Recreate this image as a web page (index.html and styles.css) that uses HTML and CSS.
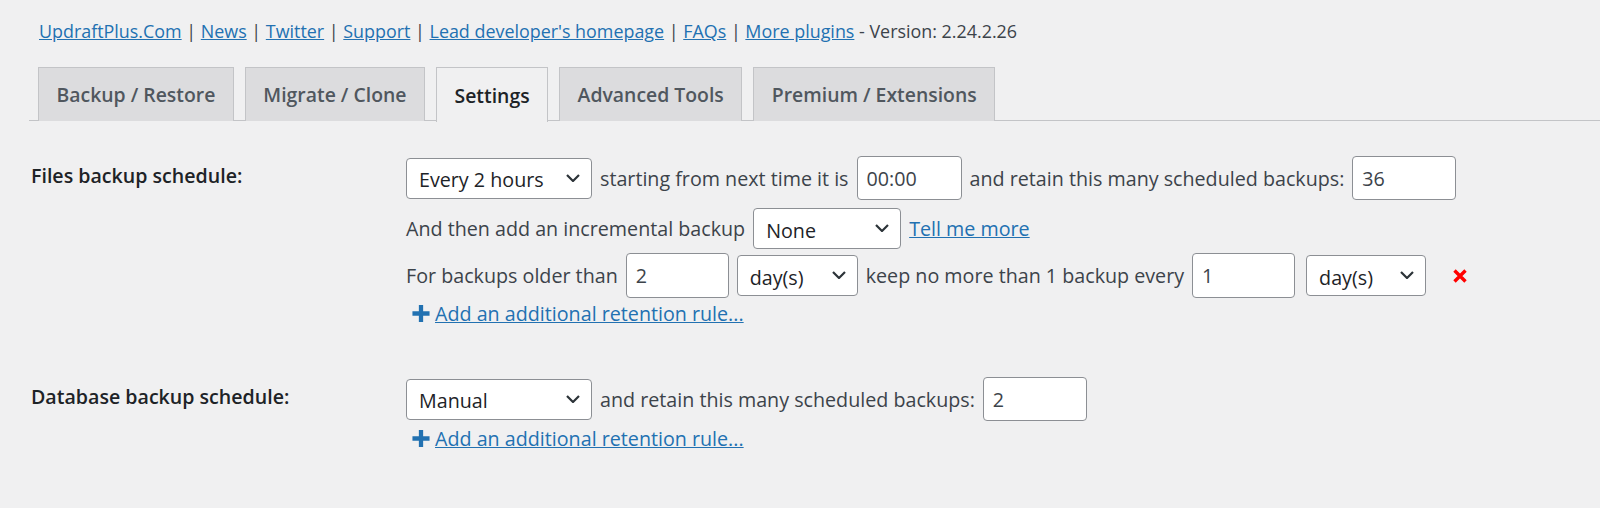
FILE: index.html
```html
<html lang="en">
    <head>
        <meta http-equiv="content-type" content="text/html; charset=utf-8" />
        <link rel="stylesheet" href="styles.css">
    </head>
    <body>
        <div class="wrap">
            <div class="topLinks">
                <a href="#">UpdraftPlus.Com</a> | <a href="#">News</a> | <a href="#">Twitter</a> | <a href="#">Support</a> | <a href="#">Lead developer's homepage</a> | <a href="#">FAQs</a> | <a href="#">More plugins</a> - Version: 2.24.2.26
            </div>

            <div class="tabs">
                <a class="tab" href="#">Backup / Restore</a>
                <a class="tab" href="#">Migrate / Clone</a>
                <a class="tab active" href="#">Settings</a>
                <a class="tab" href="#">Advanced Tools</a>
                <a class="tab" href="#">Premium / Extensions</a>
            </div>

            <div class="settingsRow filesRow">
                <label class="rowTitle">Files backup schedule:</label>
                <div class="rowBody">
                    <div class="line line1">
                        <span class="selectWrap w186">
                            <select class="select"><option>Every 2 hours</option></select>
                            <svg class="chev" viewBox="0 0 14 8"><path d="M1 1 L7 7 L13 1" /></svg>
                        </span>
                        <span>starting from next time it is</span>
                        <input class="input w105" type="text" value="00:00">
                        <span>and retain this many scheduled backups:</span>
                        <input class="input w104" type="number" value="36">
                    </div>
                    <div class="line line2">
                        <span>And then add an incremental backup</span>
                        <span class="selectWrap w148">
                            <select class="select"><option>None</option></select>
                            <svg class="chev" viewBox="0 0 14 8"><path d="M1 1 L7 7 L13 1" /></svg>
                        </span>
                        <a href="#">Tell me more</a>
                    </div>
                    <div class="line line3">
                        <span>For backups older than</span>
                        <input class="input w103 tall" type="number" value="2">
                        <span class="selectWrap w121">
                            <select class="select"><option>day(s)</option></select>
                            <svg class="chev" viewBox="0 0 14 8"><path d="M1 1 L7 7 L13 1" /></svg>
                        </span>
                        <span>keep no more than 1 backup every</span>
                        <input class="input w103 tall" type="number" value="1">
                        <span class="selectWrap w120 gapLeft">
                            <select class="select"><option>day(s)</option></select>
                            <svg class="chev" viewBox="0 0 14 8"><path d="M1 1 L7 7 L13 1" /></svg>
                        </span>
                        <svg class="removeRule" viewBox="0 0 16 16"><path d="M2.5 2.5 L13.5 13.5 M13.5 2.5 L2.5 13.5" /></svg>
                    </div>
                    <div class="line addLine">
                        <svg class="plus" viewBox="0 0 20 20"><path d="M10 1 V19 M1 10 H19" /></svg>
                        <a href="#">Add an additional retention rule...</a>
                    </div>
                </div>
            </div>

            <div class="settingsRow dbRow">
                <label class="rowTitle">Database backup schedule:</label>
                <div class="rowBody">
                    <div class="line line1">
                        <span class="selectWrap w186">
                            <select class="select"><option>Manual</option></select>
                            <svg class="chev" viewBox="0 0 14 8"><path d="M1 1 L7 7 L13 1" /></svg>
                        </span>
                        <span>and retain this many scheduled backups:</span>
                        <input class="input w104" type="number" value="2">
                    </div>
                    <div class="line addLine">
                        <svg class="plus" viewBox="0 0 20 20"><path d="M10 1 V19 M1 10 H19" /></svg>
                        <a href="#">Add an additional retention rule...</a>
                    </div>
                </div>
            </div>
        </div>
    </body>
</html>
```

FILE: styles.css
```css
* {
    font-family: 'Open Sans', 'Noto Sans', sans-serif;
    box-sizing: border-box;
}

body {
    margin: 0;
    background-color: #f0f0f1;
    color: #3c434a;
    font-size: 19.7px;
}

a {
    color: #2271b1;
}

.wrap {
    padding-left: 29px;
}

.topLinks {
    padding: 19px 0 0 10px;
    height: 67px;
    font-size: 17.9px;
    color: #3c434a;
}

.tabs {
    display: flex;
    gap: 11px;
    padding-left: 9px;
    border-bottom: 1px solid #c3c4c7;
    height: 54px;
}

.tab {
    display: flex;
    align-items: center;
    padding: 0 17.5px;
    height: 54px;
    background-color: #dcdcde;
    border: 1px solid #c3c4c7;
    border-bottom: none;
    color: #50575e;
    font-size: 19.4px;
    font-weight: 600;
    text-decoration: none;
}

.tab.active {
    background-color: #f0f0f1;
    color: #1d2327;
    height: 55px;
}

.settingsRow {
    display: grid;
    grid-template-columns: 375px auto;
    padding-left: 2px;
}

.filesRow {
    margin-top: 35px;
}

.dbRow {
    margin-top: 52px;
}

.rowTitle {
    color: #1d2327;
    font-weight: 600;
    font-size: 19.6px;
    padding-top: 6px;
}

.line {
    display: flex;
    align-items: center;
    gap: 8px;
    white-space: nowrap;
}

.line1 {
    height: 44px;
}

.line2 {
    height: 49px;
    margin-top: 4px;
}

.line3 {
    height: 45px;
}

.addLine {
    gap: 4px;
    height: 24px;
    padding-left: 5px;
    margin-top: 3px;
}

.dbRow .addLine {
    margin-top: 5px;
}

.selectWrap {
    position: relative;
    display: inline-block;
}

.select {
    appearance: none;
    -webkit-appearance: none;
    width: 100%;
    height: 41px;
    padding: 3px 30px 0 12px;
    font-size: 19.7px;
    color: #1d2327;
    background-color: #ffffff;
    border: 1px solid #8c8f94;
    border-radius: 4px;
    outline: none;
}

.chev {
    position: absolute;
    right: 12px;
    top: 16px;
    width: 14px;
    height: 8px;
    fill: none;
    stroke: #2c3338;
    stroke-width: 2.2;
}

.input {
    height: 44px;
    padding: 0 9px;
    font-size: 19.7px;
    color: #3c434a;
    background-color: #ffffff;
    border: 1px solid #8c8f94;
    border-radius: 4px;
    outline: none;
}

.input.tall {
    height: 45px;
}

input::-webkit-outer-spin-button,
input::-webkit-inner-spin-button {
    -webkit-appearance: none;
    margin: 0;
}

.w103 { width: 103px; }
.w104 { width: 104px; }
.w105 { width: 105px; }
.w120 { width: 120px; }
.w121 { width: 121px; }
.w148 { width: 148px; }
.w186 { width: 186px; }

.gapLeft {
    margin-left: 3px;
}

.removeRule {
    width: 16px;
    height: 16px;
    margin-left: 18px;
    fill: none;
    stroke: #ff0000;
    stroke-width: 3.4;
}

.plus {
    width: 20px;
    height: 19px;
    fill: none;
    stroke: #2271b1;
    stroke-width: 4.5;
}
```
